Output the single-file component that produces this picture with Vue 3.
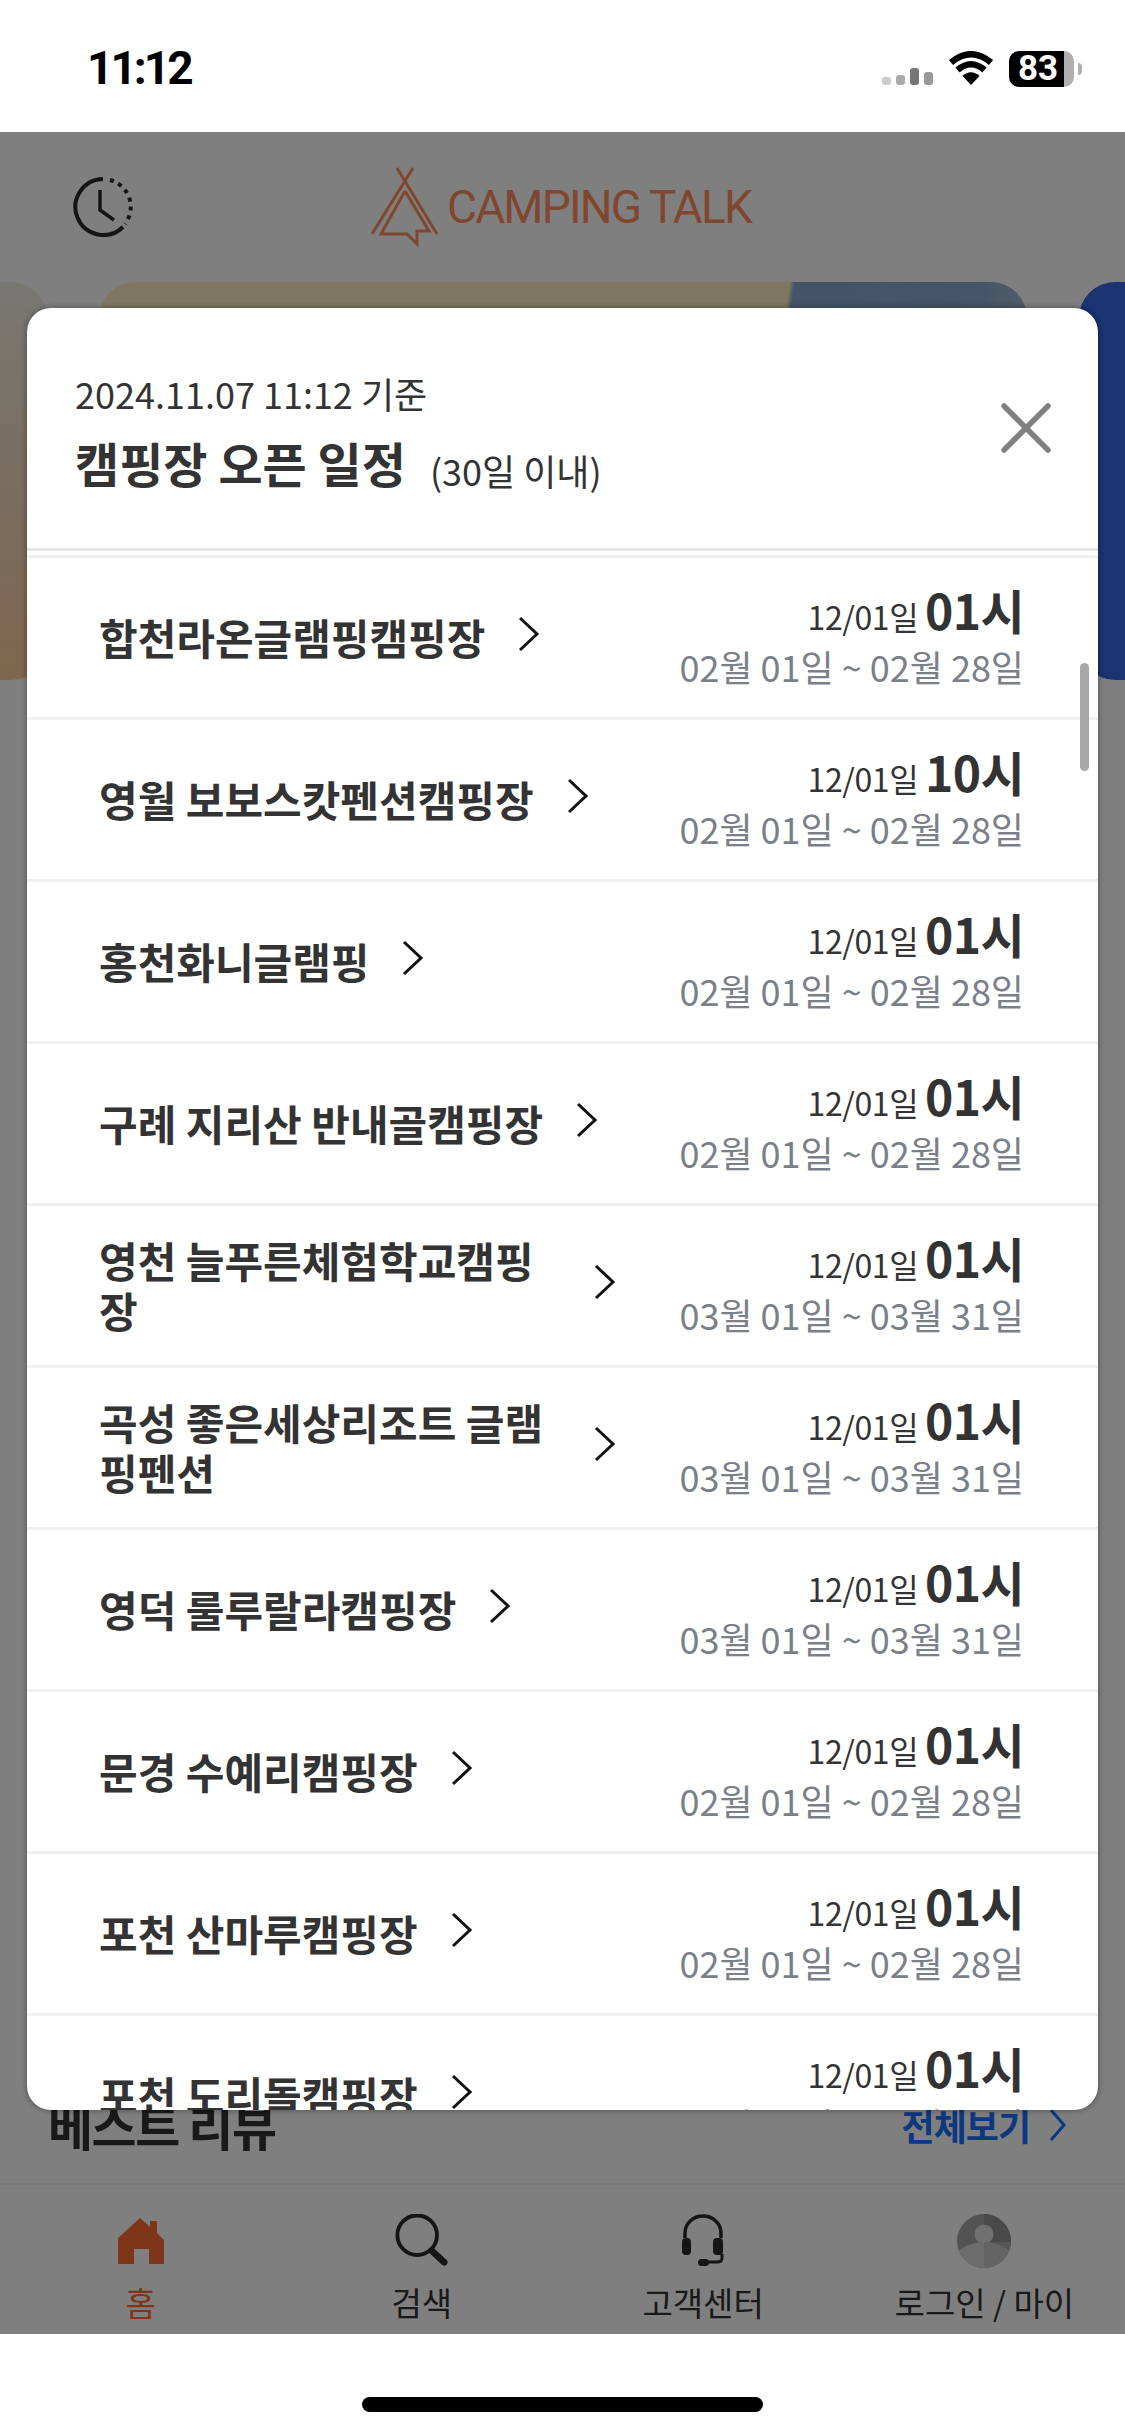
<template>
  <div class="phone">
    <div class="status-bar">
      <span class="clock">11:12</span>
      <div class="status-icons">
        <div class="signal">
          <i class="bar b1"></i><i class="bar b2"></i><i class="bar b3"></i><i class="bar b4"></i>
        </div>
        <svg class="wifi" width="46" height="34" viewBox="0 0 46 34">
          <path d="M23 34 L14.5 25 Q23 17.5 31.5 25 Z" fill="#000" />
          <path d="M9.5 19 Q23 7.5 36.5 19" fill="none" stroke="#000" stroke-width="6.5" />
          <path d="M3 11.5 Q23 -5 43 11.5" fill="none" stroke="#000" stroke-width="6.5" />
        </svg>
        <div class="battery">
          <div class="battery-body"><span>83</span></div>
          <i class="battery-nub"></i>
        </div>
      </div>
    </div>

    <div class="screen">
      <header class="app-header">
        <svg class="history" width="60" height="60" viewBox="0 0 60 60" fill="none" stroke="#2a2a2a" stroke-width="4">
          <path d="M30 2 A28 28 0 1 0 50 50" />
          <path d="M37 3 A28 28 0 0 1 52 47" stroke-dasharray="4 5" />
          <path d="M27 13 V33 L41 43" stroke-width="3.5" />
        </svg>
        <div class="logo">
          <svg width="68" height="80" viewBox="0 0 68 80" fill="none" stroke="#ff8d60" stroke-width="3">
            <path d="M26 1 L66 67" />
            <path d="M42 1 L1 67" />
            <path d="M34 24 L10 67 H36 L46 77 V64 H58 L34 24" />
          </svg>
          <span class="logo-text">CAMPING TALK</span>
        </div>
      </header>

      <div class="carousel">
        <div class="slide slide-left"></div>
        <div class="slide slide-main"></div>
        <div class="slide slide-right"></div>
      </div>

      <div class="section-head">
        <h2>베스트 리뷰</h2>
        <a class="more">
          전체보기
          <svg width="18" height="34" viewBox="0 0 18 34" fill="none" stroke="#1670ff" stroke-width="3">
            <path d="M2 2 L15 17 L2 32" />
          </svg>
        </a>
      </div>

      <nav class="tabbar">
        <div class="tab active">
          <svg width="46" height="48" viewBox="0 0 46 48" fill="#ff6a35">
            <path d="M0 46 V21 L22 1 L32 10 V4 H39 V16 L46 23 V47 H31 V32 H16 V47 H0 Z" />
          </svg>
          <span>홈</span>
        </div>
        <div class="tab">
          <svg width="56" height="56" viewBox="0 0 56 56" fill="none" stroke="#2a2a2a">
            <circle cx="23" cy="22" r="20.5" stroke-width="4" />
            <path d="M38 38 L51 50" stroke-width="7" stroke-linecap="round" />
          </svg>
          <span>검색</span>
        </div>
        <div class="tab">
          <svg width="46" height="54" viewBox="0 0 46 54" fill="none" stroke="#2a2a2a">
            <path d="M5 24 V19 A18 17 0 0 1 41 19 V24" stroke-width="3.5" />
            <rect x="2" y="24" width="9" height="17" rx="4" fill="#2a2a2a" stroke="none" />
            <rect x="33" y="24" width="10" height="17" rx="4" fill="#2a2a2a" stroke="none" />
            <path d="M42 40 V44 Q42 48 37 48 H22" stroke-width="3" />
            <rect x="18" y="45" width="11" height="7" rx="3.5" fill="#2a2a2a" stroke="none" />
          </svg>
          <span>고객센터</span>
        </div>
        <div class="tab">
          <svg width="54" height="54" viewBox="0 0 54 54">
            <defs>
              <clipPath id="avatar-clip"><circle cx="27" cy="27" r="27" /></clipPath>
            </defs>
            <g clip-path="url(#avatar-clip)">
              <rect width="54" height="54" fill="#a6a6a6" />
              <rect x="27" width="27" height="54" fill="#929292" />
              <circle cx="27" cy="20" r="9.5" fill="#e0e0e0" />
              <ellipse cx="27" cy="54" rx="34" ry="26" fill="#d8d8d8" />
              <path d="M27 28 H62 V54 H27 Z" fill="#bdbdbd" opacity="0.55" />
            </g>
          </svg>
          <span>로그인 / 마이</span>
        </div>
      </nav>

      <div class="dim"></div>

      <section class="modal">
        <div class="modal-head">
          <div>
            <p class="base-time">2024.11.07 11:12 기준</p>
            <p class="modal-title">캠핑장 오픈 일정<small>(30일 이내)</small></p>
          </div>
          <svg class="close" width="52" height="52" viewBox="0 0 52 52" stroke="#808080" stroke-width="5.5" stroke-linecap="round">
            <path d="M4 4 L48 48 M48 4 L4 48" />
          </svg>
        </div>
        <ul class="list">
          <li v-for="item in sites" :key="item.name" class="row">
            <div class="row-left">
              <span class="name">{{ item.name }}</span>
              <svg class="chevron" width="22" height="36" viewBox="0 0 22 36" fill="none" stroke="#111" stroke-width="3">
                <path d="M2 2 L19 18 L2 34" />
              </svg>
            </div>
            <div class="row-right">
              <p class="open-at">12/01일 <b>{{ item.hour }}시</b></p>
              <p class="period">{{ item.period }}</p>
            </div>
          </li>
        </ul>
        <i class="scroll-thumb"></i>
      </section>
    </div>

    <div class="home-area"><i class="home-bar"></i></div>
  </div>
</template>

<script setup>
const feb = '02월 01일 ~ 02월 28일'
const mar = '03월 01일 ~ 03월 31일'

const sites = [
  { name: '합천라온글램핑캠핑장', hour: '01', period: feb },
  { name: '영월 보보스캇펜션캠핑장', hour: '10', period: feb },
  { name: '홍천화니글램핑', hour: '01', period: feb },
  { name: '구례 지리산 반내골캠핑장', hour: '01', period: feb },
  { name: '영천 늘푸른체험학교캠핑장', hour: '01', period: mar },
  { name: '곡성 좋은세상리조트 글램핑펜션', hour: '01', period: mar },
  { name: '영덕 룰루랄라캠핑장', hour: '01', period: mar },
  { name: '문경 수예리캠핑장', hour: '01', period: feb },
  { name: '포천 산마루캠핑장', hour: '01', period: feb },
  { name: '포천 도리돌캠핑장', hour: '01', period: feb }
]
</script>

<style scoped>
.phone {
  width: 1125px;
  height: 2436px;
  display: flex;
  flex-direction: column;
  overflow: hidden;
  background: #fff;
  font-family: "Noto Sans CJK KR", "Noto Sans", sans-serif;
  color: #333;
}

.status-bar {
  height: 132px;
  flex: none;
  display: flex;
  justify-content: space-between;
  padding: 44px 43px 0 87px;
  box-sizing: border-box;
}

.clock {
  font-family: Roboto, sans-serif;
  font-weight: 700;
  font-size: 46px;
  line-height: 48px;
  letter-spacing: -3px;
  color: #000;
}

.status-icons {
  display: flex;
  align-items: flex-start;
  padding-top: 7px;
}

.signal {
  display: flex;
  align-items: flex-end;
  gap: 5px;
  height: 34px;
  width: 51px;
  margin-right: 15px;
}

.bar {
  width: 9px;
  border-radius: 3px;
}

.b1 { height: 8px; background: #ccc; }
.b2 { height: 10px; background: #aaa; }
.b3 { height: 17px; background: #777; }
.b4 { height: 13px; background: #999; }

.battery {
  display: flex;
  align-items: center;
  margin-left: 15px;
}

.battery-body {
  width: 65px;
  height: 36px;
  border-radius: 10px;
  background: linear-gradient(90deg, #000 55px, #b0b0b0 55px);
  color: #fff;
  font-family: Roboto, sans-serif;
  font-weight: 700;
  font-size: 35px;
  line-height: 36px;
  padding-left: 9px;
  box-sizing: border-box;
}

.battery-nub {
  width: 4px;
  height: 12px;
  margin-left: 4px;
  border-radius: 0 4px 4px 0;
  background: #b0b0b0;
}

.screen {
  position: relative;
  height: 2202px;
  flex: none;
  display: flex;
  flex-direction: column;
  background: #fff;
}

.app-header {
  height: 150px;
  flex: none;
  display: flex;
  align-items: center;
  padding-left: 73px;
}

.logo {
  display: flex;
  align-items: center;
  gap: 8px;
  margin-left: 238px;
}

.logo-text {
  font-family: Roboto, sans-serif;
  font-weight: 400;
  font-size: 46px;
  letter-spacing: -1.8px;
  color: #ff8d60;
}

.carousel {
  height: 398px;
  flex: none;
  display: flex;
  justify-content: center;
  gap: 52px;
}

.slide {
  width: 928px;
  flex: none;
  border-radius: 36px;
}

.slide-left {
  background: linear-gradient(180deg, #f0f0e6, #f4dcc0 50%, #ffcc9c);
}

.slide-main {
  background: linear-gradient(98deg, #ffefc0 70.2%, #86a8d4 70.7%, #8aaad0 90%, #c0c8d0);
}

.slide-right {
  background: #3666e0;
}

.section-head {
  margin-top: auto;
  height: 103px;
  flex: none;
  padding: 0 58px 14px 48px;
  box-sizing: border-box;
  display: flex;
  justify-content: space-between;
  align-items: center;
}

.section-head h2 {
  margin: 0;
  font-size: 49px;
  font-weight: 700;
  letter-spacing: -1.5px;
  color: #333;
}

.more {
  display: flex;
  align-items: center;
  gap: 19px;
  font-size: 36px;
  font-weight: 700;
  color: #1670ff;
  letter-spacing: -1px;
}

.tabbar {
  height: 151px;
  flex: none;
  display: grid;
  grid-template-columns: repeat(4, 1fr);
  border-top: 2px solid #f4f4f4;
  box-sizing: border-box;
}

.tab {
  display: flex;
  flex-direction: column;
  align-items: center;
  padding-top: 29px;
  color: #333;
  font-size: 33px;
}

.tab svg {
  height: 54px;
}

.tab span {
  margin-top: 11px;
  line-height: 46px;
  white-space: nowrap;
}

.tab.active {
  color: #ff6a35;
}

.dim {
  position: absolute;
  inset: 0;
  background: rgba(0, 0, 0, 0.5);
}

.modal {
  position: absolute;
  left: 27px;
  top: 176px;
  width: 1071px;
  height: 1802px;
  background: #fff;
  border-radius: 24px;
  box-shadow: 0 0 4px 2px rgba(0, 0, 0, 0.22);
  display: flex;
  flex-direction: column;
  overflow: hidden;
}

.modal-head {
  height: 243px;
  flex: none;
  padding: 59px 46px 0 48px;
  box-sizing: border-box;
  border-bottom: 3px solid #e5e7e7;
  display: flex;
  justify-content: space-between;
}

.base-time {
  margin: 0;
  font-size: 36px;
  line-height: 52px;
  color: #333;
}

.modal-title {
  margin: 10px 0 0;
  font-size: 48px;
  font-weight: 700;
  line-height: 66px;
  color: #333;
}

.modal-title small {
  font-size: 36px;
  font-weight: 400;
  margin-left: 24px;
  vertical-align: -3px;
}

.close {
  margin-top: 35px;
}

.list {
  margin: 4px 0 0;
  padding: 0;
  list-style: none;
  border-top: 3px solid #f0f0f0;
  flex: 1;
  min-height: 0;
  overflow: hidden;
}

.row {
  height: 162px;
  box-sizing: border-box;
  border-bottom: 3px solid #f0f0f0;
  padding: 0 74px 0 72px;
  display: flex;
  justify-content: space-between;
  align-items: center;
}

.row-left {
  display: flex;
  align-items: center;
  gap: 33px;
  margin-bottom: 2px;
}

.name {
  max-width: 462px;
  font-size: 42px;
  font-weight: 700;
  line-height: 50px;
  color: #333;
}

.chevron {
  flex: none;
  margin-bottom: 6px;
}

.row-right {
  text-align: right;
  white-space: nowrap;
}

.open-at {
  margin: 0;
  font-size: 32px;
  line-height: 56px;
  letter-spacing: -0.4px;
  color: #333;
}

.open-at b {
  font-size: 48px;
  font-weight: 700;
  letter-spacing: -0.6px;
}

.period {
  margin: -3px 0 0;
  padding-bottom: 3px;
  font-size: 36px;
  line-height: 50px;
  color: #7a8088;
}

.scroll-thumb {
  position: absolute;
  left: 1053px;
  top: 355px;
  width: 9px;
  height: 108px;
  border-radius: 5px;
  background: #a8a8a8;
}

.home-area {
  flex: 1;
  display: flex;
  justify-content: center;
  padding-top: 63px;
}

.home-bar {
  width: 401px;
  height: 15px;
  border-radius: 8px;
  background: #000;
}
</style>
